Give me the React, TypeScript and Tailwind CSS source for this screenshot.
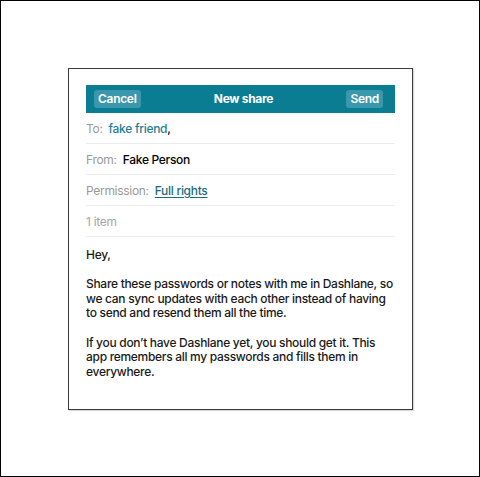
export default function App() {
  const rows = [
    { label: "To:", value: <><span className="text-[#1f7f95]">fake friend</span><span className="text-black">,</span></> },
    { label: "From:", value: <span className="text-black">Fake Person</span> },
    { label: "Permission:", value: <span className="text-[#1d6c7e] underline underline-offset-2">Full rights</span> },
  ];

  return (
    <div
      className="w-[480px] h-[477px] border border-black bg-white pt-[67px] pl-[67px]"
      style={{ fontFamily: "Inter, 'Noto Sans', sans-serif" }}
    >
      <div className="w-[345px] h-[342px] border border-[#3a3a3a] shadow-[1px_1px_1px_rgba(0,0,0,0.15)] px-[17px] pt-[16px]">
        {/* Header bar */}
        <div className="flex h-[28px] items-center justify-between bg-[#0b7d93] pl-2 pr-3 tracking-[-0.3px]">
          <span className="rounded-[3px] bg-[#3b97ab] px-[4px] h-[18px] flex items-center text-[12px] font-semibold text-white">Cancel</span>
          <span className="text-[12px] font-bold text-white">New share</span>
          <span className="rounded-[3px] bg-[#3b97ab] px-[4px] h-[18px] flex items-center text-[12px] font-semibold text-white">Send</span>
        </div>

        {/* Fields */}
        {rows.map((r) => (
          <div key={r.label} className="flex h-[31px] items-center gap-[6px] border-b border-[#ececec] pt-[2px] text-[12px] font-medium tracking-[-0.3px]">
            <span className="font-normal text-[#9a9a9a]">{r.label}</span>
            <span>{r.value}</span>
          </div>
        ))}
        <div className="flex h-[31px] items-center border-b border-[#ececec] pt-[2px] text-[12px] tracking-[-0.3px] text-[#a5a5a5]">1 item</div>

        {/* Message */}
        <div className="pt-[11px] text-[12px] font-medium leading-[14.6px] tracking-[-0.3px] text-[#1a1a1a]">
          <p>Hey,</p>
          <p className="mt-[14.6px]">
            Share these passwords or notes with me in Dashlane, so we can sync updates with each other instead of having to send and resend them all the time.
          </p>
          <p className="mt-[14.6px]">
            If you don’t have Dashlane yet, you should get it. This app remembers all my passwords and fills them in everywhere.
          </p>
        </div>
      </div>
    </div>
  );
}
